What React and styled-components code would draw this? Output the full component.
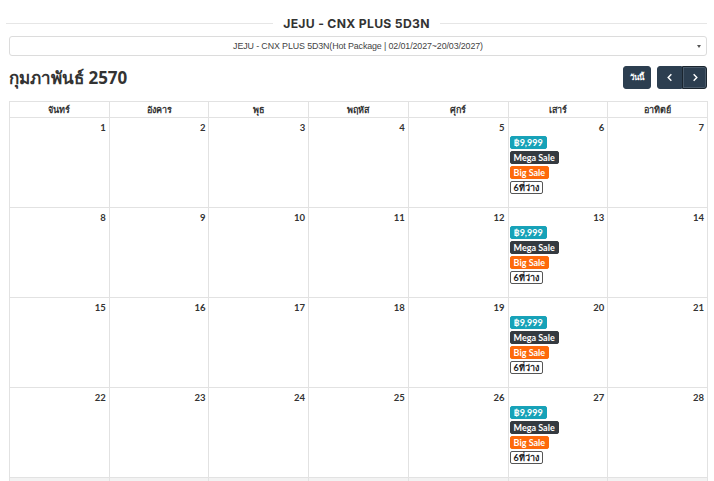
import React from 'react';
import styled, { createGlobalStyle } from 'styled-components';

const GlobalStyle = createGlobalStyle`
  *, *::before, *::after { box-sizing: border-box; }
  body {
    margin: 0;
    background: #fff;
    font-family: Lato, "Noto Sans", sans-serif;
    color: #333;
  }
`;

const Page = styled.div`
  padding: 15px 7px 0 9px;
`;

const TitleRow = styled.div`
  display: flex;
  align-items: center;
  gap: 10px;
  margin: 0 0 4px -3px;
  height: 17px;
`;

const Line = styled.div`
  flex: 1;
  height: 1px;
  background: #e6e6e6;
`;

const Title = styled.h2`
  margin: 0;
  font-family: Inter, "Open Sans", sans-serif;
  font-size: 12.2px;
  font-weight: 700;
  color: #333;
  letter-spacing: 0.3px;
`;

const Select = styled.div`
  position: relative;
  height: 20px;
  border: 1px solid #dcdcdc;
  border-radius: 3px;
  display: flex;
  align-items: center;
  justify-content: center;
  font-family: "Liberation Sans", sans-serif;
  font-size: 8.9px;
  letter-spacing: -0.12px;
  color: #444;
`;

const Caret = styled.span`
  position: absolute;
  right: 5px;
  top: 8px;
  border-left: 2.5px solid transparent;
  border-right: 2.5px solid transparent;
  border-top: 3px solid #555;
`;

const Toolbar = styled.div`
  display: flex;
  justify-content: space-between;
  align-items: center;
  margin-top: 8px;
  height: 26px;
`;

const Month = styled.h1`
  margin: 0;
  font-family: "Noto Sans", sans-serif;
  font-size: 17px;
  font-weight: 700;
  color: #333;
`;

const Actions = styled.div`
  display: flex;
  gap: 6px;
`;

const Btn = styled.button`
  height: 23px;
  min-width: ${(p) => (p.$wide ? 28 : 25)}px;
  padding: 0 6px;
  background: #2c3e50;
  color: #fff;
  border: 1px solid ${(p) => (p.$active ? '#1a252f' : '#2c3e50')};
  box-shadow: ${(p) => (p.$active ? 'inset 0 0 0 1px #4a5a6a' : 'none')};
  border-radius: ${(p) => p.$radius || '3px'};
  font-family: "Noto Sans", sans-serif;
  font-size: 8px;
  font-weight: 700;
  display: flex;
  align-items: center;
  justify-content: center;
  cursor: pointer;
`;

const Group = styled.div`
  display: flex;
`;

const Calendar = styled.div`
  margin-top: 11px;
  display: grid;
  grid-template-columns: repeat(7, 1fr);
  width: 699px;
  border-left: 1px solid #e2e2e2;
  border-top: 1px solid #e2e2e2;
`;

const Head = styled.div`
  height: 16px;
  border-right: 1px solid #e2e2e2;
  border-bottom: 1px solid #e2e2e2;
  display: flex;
  align-items: center;
  justify-content: center;
  font-family: "Noto Sans", sans-serif;
  font-size: 9px;
  font-weight: 700;
  color: #333;
`;

const Cell = styled.div`
  height: 90px;
  border-right: 1px solid #e2e2e2;
  border-bottom: 1px solid #e2e2e2;
  background: ${(p) => (p.$other ? '#f2f2f2' : '#fff')};
  padding: 4px 3px 0 1px;
  display: flex;
  flex-direction: column;
  align-items: flex-start;
  gap: 2px;
`;

const DayNum = styled.span`
  align-self: flex-end;
  font-size: 9.5px;
  font-weight: 700;
  color: #333;
  line-height: 11px;
  margin-bottom: 1px;
`;

const Badge = styled.span`
  font-size: 9px;
  font-weight: 700;
  line-height: 11px;
  padding: 0 3px;
  border-radius: 2px;
  color: ${(p) => (p.$outline ? '#222' : '#fff')};
  background: ${(p) => p.$bg || '#fff'};
  border: 1px solid ${(p) => (p.$outline ? '#555' : p.$bg)};
  font-family: Lato, "Noto Sans", sans-serif;
`;

const days = ['จันทร์', 'อังคาร', 'พุธ', 'พฤหัส', 'ศุกร์', 'เสาร์', 'อาทิตย์'];

const Chevron = ({ dir }) => (
  <svg width="8" height="9" viewBox="0 0 8 10">
    <path
      d={dir === 'left' ? 'M5.5 1.5 L2 5 L5.5 8.5' : 'M2.5 1.5 L6 5 L2.5 8.5'}
      fill="none"
      stroke="#fff"
      strokeWidth="1.6"
    />
  </svg>
);

const DayCell = ({ day }) => {
  const hasDeal = day && day % 7 === 6;
  return (
    <Cell $other={!day}>
      {day && <DayNum>{day}</DayNum>}
      {hasDeal && (
        <>
          <Badge $bg="#17a2b8">฿9,999</Badge>
          <Badge $bg="#343a40">Mega Sale</Badge>
          <Badge $bg="#fd6a0c">Big Sale</Badge>
          <Badge $outline>6ที่ว่าง</Badge>
        </>
      )}
    </Cell>
  );
};

const App = () => {
  const cells = [];
  for (let d = 1; d <= 28; d++) cells.push(d);
  for (let i = 0; i < 7; i++) cells.push(null);

  return (
    <>
      <GlobalStyle />
      <Page>
        <TitleRow>
          <Line />
          <Title>JEJU - CNX PLUS 5D3N</Title>
          <Line />
        </TitleRow>
        <Select>
          JEJU - CNX PLUS 5D3N(Hot Package | 02/01/2027~20/03/2027)
          <Caret />
        </Select>
        <Toolbar>
          <Month>กุมภาพันธ์ 2570</Month>
          <Actions>
            <Btn $wide>วันนี้</Btn>
            <Group>
              <Btn $radius="3px 0 0 3px">
                <Chevron dir="left" />
              </Btn>
              <Btn $radius="0 3px 3px 0" $active>
                <Chevron dir="right" />
              </Btn>
            </Group>
          </Actions>
        </Toolbar>
        <Calendar>
          {days.map((d) => (
            <Head key={d}>{d}</Head>
          ))}
          {cells.map((d, i) => (
            <DayCell key={i} day={d} />
          ))}
        </Calendar>
      </Page>
    </>
  );
};

export default App;
